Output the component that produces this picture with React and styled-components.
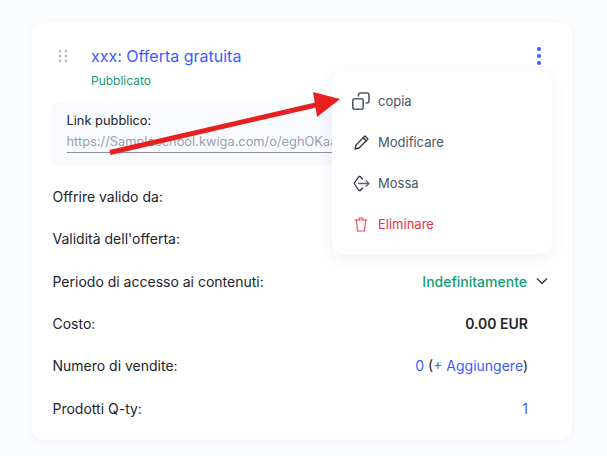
import React from 'react';
import styled, { createGlobalStyle } from 'styled-components';

const Global = createGlobalStyle`
  html, body { margin: 0; background: #fbfcfe; }
  body { font-family: Inter, "Liberation Sans", sans-serif; width: 607px; height: 456px; overflow: hidden; }
`;

const Page = styled.div`
  position: relative;
  width: 607px;
  height: 456px;
  padding: 23px 35px 16px 32px;
  box-sizing: border-box;
`;

const Card = styled.div`
  position: relative;
  height: 417px;
  box-sizing: border-box;
  padding: 21px 20px 0;
  background: #fff;
  border-radius: 12px;
  box-shadow: 0 2px 10px rgba(60, 80, 140, 0.05);
`;

const Header = styled.div`
  display: flex;
  align-items: flex-start;
  height: 58px;
`;

const Grip = styled.svg`
  width: 8px;
  height: 14px;
  margin: 5px 0 0 7px;
`;

const TitleCol = styled.div`
  margin-left: 24px;
  flex: 1;
`;

const Title = styled.div`
  font-size: 16px;
  line-height: 24px;
  color: #3d5cff;
`;

const Status = styled.div`
  margin-top: 4px;
  font-size: 12px;
  line-height: 18px;
  color: #0f9d76;
`;

const Dots = styled.svg`
  width: 6px;
  height: 18px;
  margin: 3px 10px 0 0;
`;

const LinkBox = styled.div`
  height: 64px;
  box-sizing: border-box;
  padding: 9px 15px 9px 14.5px;
  background: #f9fafe;
  border-radius: 8px;
  overflow: hidden;
`;

const LinkLabel = styled.div`
  font-size: 12.85px;
  line-height: 19px;
  color: #22242c;
`;

const LinkValue = styled.div`
  padding-top: 2px;
  font-size: 12.85px;
  line-height: 20px;
  color: #9a9fb0;
  border-bottom: 1px solid #8d90a0;
  white-space: nowrap;
`;

const Rows = styled.div`
  display: flex;
  flex-direction: column;
  margin-top: 9.4px;
  padding-left: 0.5px;
`;

const Row = styled.div`
  display: flex;
  align-items: center;
  justify-content: space-between;
  height: 42.3px;
  padding-right: ${p => (p.$chevron ? '0' : '24px')};
  font-size: 14px;
  color: #22242c;
`;

const Value = styled.span`
  font-weight: ${p => p.$weight || 400};
  color: ${p => p.$color || '#22242c'};
`;

const Chevron = styled.svg`
  width: 12px;
  height: 8px;
  margin: 0 4px 0 9px;
`;

const ValueWrap = styled.div`
  display: flex;
  align-items: center;
`;

const Menu = styled.div`
  position: absolute;
  top: 48px;
  left: 300px;
  width: 220px;
  height: 183px;
  box-sizing: border-box;
  padding: 9px 0;
  background: #fff;
  border-radius: 12px;
  box-shadow: 0 4px 16px rgba(60, 80, 140, 0.09);
`;

const MenuItem = styled.div`
  display: flex;
  align-items: center;
  height: 41px;
  padding-left: 20px;
  gap: 8px;
  font-size: 13px;
  color: ${p => (p.$danger ? '#e5344c' : '#4a5568')};
`;

const Glyph = styled.svg`
  display: block;
  width: 18px;
  height: 18px;
  fill: none;
  stroke: ${p => p.$stroke || '#2f323a'};
  stroke-width: ${p => p.$weight || 1.3};
  stroke-linejoin: round;
  stroke-linecap: round;
`;

const Arrow = styled.svg`
  position: absolute;
  top: 0;
  left: 0;
  pointer-events: none;
`;

const CopyIcon = () => (
  <Glyph viewBox="0 0 18 18" $stroke="#525b6c" $weight={1.6}>
    <rect x="0.8" y="6.8" width="10.4" height="10.4" rx="2" />
    <path d="M6.5 4 V3 a2 2 0 0 1 2 -2 H15 a2 2 0 0 1 2 2 V9 a2 2 0 0 1 -2 2 H14.2" />
  </Glyph>
);

const PencilIcon = () => (
  <Glyph viewBox="0 0 18 18">
    <path d="M3 16 L4 12 L13 3 L16 6 L7 15 Z" />
    <path d="M11.2 4.8 L14.2 7.8" />
  </Glyph>
);

const MoveIcon = () => (
  <Glyph viewBox="0 0 18 18">
    <path d="M10.5 5 L8.2 2.5 H6.8 L2.2 9.5 L6.8 16.5 H8.2 L10.5 14" />
    <path d="M6.5 9.5 H17 M14 6.8 L17 9.5 L14 12.2" stroke="#5e6470" />
  </Glyph>
);

const TrashIcon = () => (
  <Glyph viewBox="0 0 18 18" $stroke="#e5485e" $weight={1.1}>
    <path d="M3 5 H15 M7 5 V3 H11 V5" />
    <path d="M4.5 5 L5.5 16 H12.5 L13.5 5" />
  </Glyph>
);

const rows = [
  ['Offrire valido da:', null],
  ["Validità dell'offerta:", null],
];

export default function App() {
  return (
    <Page>
      <Global />
      <Card>
        <Header>
          <Grip viewBox="0 0 8 14">
            {[2, 7, 12].map(y => [1, 7].map(x => <circle key={`${x}${y}`} cx={x} cy={y} r="1.2" fill="#a9adbb" />))}
          </Grip>
          <TitleCol>
            <Title>xxx: Offerta gratuita</Title>
            <Status>Pubblicato</Status>
          </TitleCol>
          <Dots viewBox="0 0 6 18">
            {[2, 9, 16].map(y => <circle key={y} cx="3" cy={y} r="2" fill="#3d5cff" />)}
          </Dots>
        </Header>
        <LinkBox>
          <LinkLabel>Link pubblico:</LinkLabel>
          <LinkValue>https://Sampleschool.kwiga.com/o/eghOKaa</LinkValue>
        </LinkBox>
        <Rows>
          {rows.map(([label]) => <Row key={label}>{label}</Row>)}
          <Row $chevron>
            Periodo di accesso ai contenuti:
            <ValueWrap>
              <Value $weight={500} $color="#0f9d76">Indefinitamente</Value>
              <Chevron viewBox="0 0 12 8" fill="none" stroke="#33363f" strokeWidth="1.4"><path d="M1 1.5 L6 6.5 L11 1.5" /></Chevron>
            </ValueWrap>
          </Row>
          <Row>Costo:<Value $weight={600}>0.00 EUR</Value></Row>
          <Row>
            Numero di vendite:
            <span><Value $color="#3d5cff">0</Value> (<Value $color="#3d5cff">+ Aggiungere</Value>)</span>
          </Row>
          <Row>Prodotti Q-ty:<Value $color="#3d5cff">1</Value></Row>
        </Rows>
        <Menu>
          <MenuItem><CopyIcon />copia</MenuItem>
          <MenuItem><PencilIcon />Modificare</MenuItem>
          <MenuItem><MoveIcon />Mossa</MenuItem>
          <MenuItem $danger><TrashIcon />Eliminare</MenuItem>
        </Menu>
      </Card>
      <Arrow width="607" height="456" viewBox="0 0 607 456">
        <path d="M110 152.5 L320 104" stroke="#e81f1f" strokeWidth="5" fill="none" />
        <path d="M313 92 L340 99 L317 117 Z" fill="#e81f1f" />
      </Arrow>
    </Page>
  );
}
